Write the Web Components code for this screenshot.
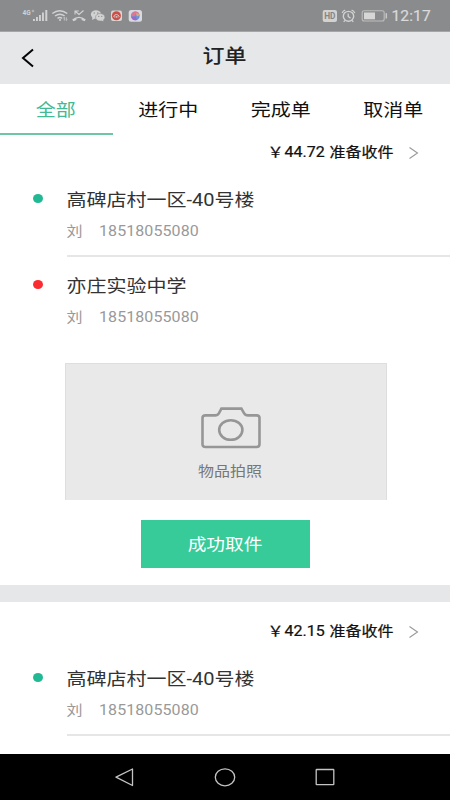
<!DOCTYPE html>
<html lang="zh-CN">
<head>
<meta charset="utf-8">
<title>订单</title>
<style>
html,body{margin:0;padding:0}
body{width:450px;height:800px;overflow:hidden;background:#fff;font-family:Roboto,"Noto Sans CJK SC",sans-serif}
</style>
</head>
<body>
<order-app></order-app>
<script>
const define=(name,html)=>customElements.define(name,class extends HTMLElement{
  constructor(){
    super();
    const t=document.createElement('template');
    t.innerHTML=html.replace(/\{(\w+)\}/g,(m,k)=>this.getAttribute(k)||'');
    this.attachShadow({mode:'open'}).append(t.content.cloneNode(true));
  }
});

define('wide-text',`<style>:host{display:block;white-space:pre;line-height:24px;height:24px;transform:translate(-.5px,.8px) scaleY(.88)}</style><slot></slot>`);

define('status-bar',`<style>
:host{display:flex;box-sizing:border-box;height:32px;background:#8a8b8c;border-bottom:1px solid #a5a6a7;align-items:center}
svg{display:block;flex:1;height:31px}
wide-text{font-size:15.6px;color:#dadada;width:58px;letter-spacing:.1px;-webkit-text-stroke:.2px}
</style>
<svg width="392" height="31" viewBox="0 0 392 31" fill="none" stroke="#d2d2d2">
<text x="22.5" y="15" font-size="6.5" font-weight="700" fill="#d2d2d2" stroke="none" font-family="Roboto,sans-serif">4G</text>
<circle cx="33" cy="11" r=".9" stroke-width=".6"/>
<g fill="#d2d2d2" stroke="none"><path d="M33 19h1.9v2H33zM36 17h1.9v4H36zM39 15h1.9v6H39zM42 12.5h1.9V21H42zM45.3 10h2v11h-2z"/></g>
<path stroke-width="1.5" d="M52.3 13.5q7.3-5.6 15 0M55 16q5-3.5 9.6 0M57.5 18.3q2.4-1.6 4.5 0"/>
<circle cx="60" cy="20" r="1" fill="#d2d2d2" stroke="none"/>
<path stroke-width=".8" d="M64.3 20.5v-3.2l-1 1M66.3 17.3v3.2l1-1"/>
<path stroke-width="1.1" d="M75 14.5v-3.5h3.8M75.5 11.5l3.5 3 4.5-4"/>
<path fill="#d2d2d2" stroke="none" d="M72.2 19.4q6.8-5.2 13.6 0l-1.2 1.9-3-1.2v-1.7q-2.6-.9-5.2 0v1.7l-3 1.2z"/>
<g fill="#d2d2d2" stroke="none"><ellipse cx="96" cy="14.5" rx="5.1" ry="4.2"/><path d="M92.5 17l-.5 3 3-1.6z"/><ellipse cx="100.2" cy="17.3" rx="4.7" ry="3.8" stroke="#8a8b8c" stroke-width=".6"/><path d="M101 20l2.4 1.5-.3-2.6z"/></g>
<g fill="#8a8b8c" stroke="none"><circle cx="94.2" cy="13" r=".7"/><circle cx="97.8" cy="13" r=".7"/><circle cx="98.8" cy="16.4" r=".6"/><circle cx="101.8" cy="16.4" r=".6"/></g>
<rect x="111" y="10.5" width="11" height="10.5" rx="2" fill="#ddd5d0" stroke="none"/><circle cx="116.4" cy="15.7" r="4.5" fill="#c94f4b" stroke="none"/><path stroke="#ddd5d0" stroke-width=".9" d="M113.3 16.5q3.1-4 6.2 0M114.8 17.6v-1.4M116.4 17.8v-1.8M118 17.6v-1.4"/>
<rect x="128.7" y="10" width="13.3" height="11.7" rx="2.5" fill="#d9d9df" stroke="none"/>
<g stroke="none"><circle cx="135.3" cy="15.8" r="4.4" fill="#6a91d9"/><path fill="#e07690" d="M131 16.5q0-4.5 4.3-5.1 3 0 4 2.4-4-1.3-4.6 2.2z"/><path fill="#a365c9" d="M131 16q1.5 1.7 4.3.2l1.7 3.7q-4.9 1.4-6-3.9z"/><path fill="#e0a873" d="M136 13.2q3-.4 3.6 2l-2.8 1.2z"/></g>
<rect x="322.7" y="10" width="14.3" height="12" rx="2" fill="#d2d2d2" stroke="none"/>
<text x="324.2" y="19" font-size="8.3" font-weight="700" textLength="11.3" lengthAdjust="spacingAndGlyphs" fill="#858687" stroke="none" font-family="Roboto,sans-serif">HD</text>
<ellipse cx="348.5" cy="16.3" rx="5.2" ry="4.9" stroke-width="1.4"/><path stroke-width="1.3" d="M348.2 13.5v3l2.3 1.6M342.2 13q.8-2.2 3-2.8M351.6 10.2q2.2.6 3.2 2.8M345 20.4l-1.3 1.5M352 20.4l1.3 1.5"/>
<rect x="362.2" y="10.8" width="22" height="10.2" rx="2" stroke="#bdbdbd" stroke-width="1.1"/><path fill="#d6d6d6" stroke="none" d="M364 12.5h11v6.8h-11z"/><path stroke="#c8c8c8" stroke-width="1.5" d="M386.3 13.2v5.3"/>
</svg><wide-text>12:17</wide-text>`);

define('title-bar',`<style>
:host{display:grid;grid-template-columns:60px 1fr 60px;align-items:center;height:52px;background:#e6e7e9}
svg{display:block;margin-left:20px}
wide-text{font-size:22px;font-weight:500;color:#222;text-align:center;margin-top:-4px}
</style><svg width="16" height="22" viewBox="0 0 16 22"><path d="M13 2.5L3 11l10 8.5" fill="none" stroke="#050505" stroke-width="2"/></svg><wide-text><slot></slot></wide-text>`);

define('tab-item',`<style>
:host{display:flex;box-sizing:border-box;height:51px;border-bottom:2px solid transparent;padding-top:13px;justify-content:center;font-size:20px;color:#111}
:host([active]){color:#43b994;border-color:#6cc7a5}
</style><wide-text><slot></slot></wide-text>`);

define('tab-strip',`<style>:host{display:grid;grid-template-columns:repeat(4,1fr)}</style><slot></slot>`);

define('price-row',`<style>
:host{display:flex;align-items:center;justify-content:flex-end;height:34px;padding-right:31px;gap:14px;font-size:16px;color:#111;-webkit-text-stroke:.25px}
span{display:inline-block;width:15px;text-indent:-2px}
b{font-weight:inherit;display:inline-block;width:45px}
svg{display:block;margin-top:2px}
</style><wide-text><span>￥</span><b>{price}</b>准备收件</wide-text><svg width="11" height="14" viewBox="0 0 11 14"><path d="M1.5 1.5L9.5 7l-8 5.5" fill="none" stroke="#999" stroke-width="1.1"/></svg>`);

define('place-row',`<style>
:host{display:grid;grid-template-columns:67px 1fr;height:86px;color:#333}
i{width:10px;height:9px;border-radius:50%;margin:23px 0 0 32.5px;background:#21b894}
:host([kind=end]) i{background:#fb2c31}
div{border-bottom:2px solid #e6e6e6;padding-top:16px}
:host([kind=end]) div{border-color:transparent}
.name{font-size:20px}
.who{font-size:16px;letter-spacing:.08px;color:#999;margin-top:8px;display:flex}
.who span{display:inline-block;width:32.5px}
</style><i></i><div><wide-text class="name"><slot></slot></wide-text><wide-text class="who"><span>刘</span>18518055080</wide-text></div>`);

define('photo-box',`<style>
:host{display:flex;flex-direction:column;align-items:center;box-sizing:border-box;width:322px;height:136.5px;margin:20px 0 .5px 65px;background:#e9e9e9;border:1px solid #dedede;border-bottom:0;padding:43px 0 0 9px;color:#777;font-size:16px}
svg{display:block}
wide-text{margin-top:9.5px}
</style><svg width="60" height="42" viewBox="0 0 60 42" fill="none" stroke="#969696" stroke-width="2.6"><path d="M4.5 8.4H14c2 0 3.2-.8 4-2.2l2.4-4.6h20l2.6 4.6c.8 1.4 2 2.2 4 2.2h8.5q3 0 3 2.6v26.3q0 2.7-3 2.7h-51q-3 0-3-2.7V11q0-2.6 3-2.6z"/><ellipse cx="29.8" cy="23" rx="11.6" ry="9.8"/></svg><wide-text><slot></slot></wide-text>`);

define('action-button',`<style>
:host{display:flex;align-items:center;justify-content:center;width:169px;height:48px;margin:20px auto 17px 141px;background:#36cb99;color:#fff;font-size:18.7px}
</style><wide-text><slot></slot></wide-text>`);

define('order-card',`<style>:host{display:flex;flex-direction:column;gap:0}price-row{margin-bottom:2px}</style><price-row price="{price}"></price-row><slot></slot>`);

define('nav-bar',`<style>
:host{display:grid;grid-template-columns:repeat(3,100px);justify-content:center;align-items:center;justify-items:center;height:46px;background:#000}
svg{display:block;fill:none;stroke:#c4c4c4;stroke-width:1.3}
</style><svg width="22" height="20" viewBox="0 0 22 20"><path d="M18.5 2L2 10.2l16.500 8.300z" stroke-linejoin="round"/></svg><svg width="22" height="20" viewBox="0 0 22 20"><ellipse cx="11" cy="10.3" rx="9.7" ry="8.5"/></svg><svg width="20" height="20" viewBox="0 0 20 20"><rect x="1.2" y="2.5" width="17.6" height="15.2" rx=".5"/></svg>`);

define('order-app',`<style>
:host{display:flex;flex-direction:column;width:450px;height:800px;background:#fff}
main{flex:1;min-height:0;overflow:hidden}
hr{border:0;margin:0 0 12px;height:17px;background:#e6e7e9}
</style>
<status-bar></status-bar><title-bar>订单</title-bar>
<tab-strip><tab-item active>全部</tab-item><tab-item>进行中</tab-item><tab-item>完成单</tab-item><tab-item>取消单</tab-item></tab-strip>
<main>
<order-card price="44.72"><place-row>高碑店村一区-40号楼</place-row><place-row kind="end">亦庄实验中学</place-row><photo-box>物品拍照</photo-box><action-button>成功取件</action-button></order-card>
<hr>
<order-card price="42.15"><place-row>高碑店村一区-40号楼</place-row></order-card>
</main>
<nav-bar></nav-bar>`);
</script>
</body>
</html>
